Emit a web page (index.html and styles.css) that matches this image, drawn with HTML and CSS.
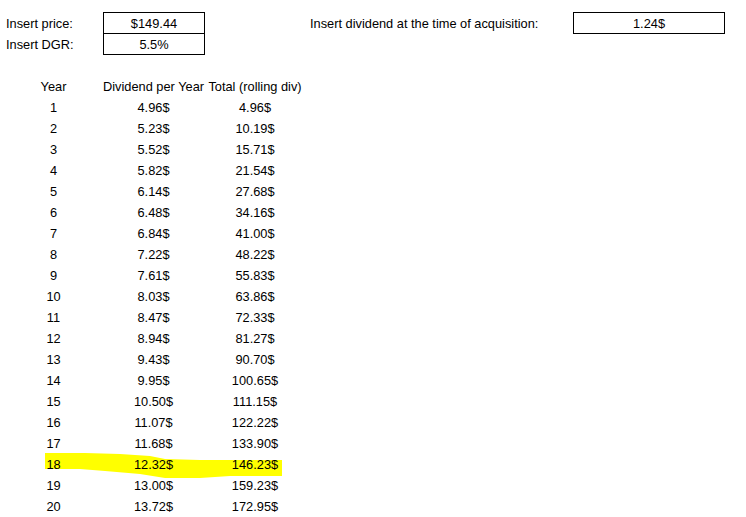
FILE: index.html
```html
<!DOCTYPE html>
<html>
<head>
<meta charset="utf-8">
<link rel="stylesheet" href="styles.css">
</head>
<body>
<div class="sheet">
  <svg class="marker" width="746" height="517" viewBox="0 0 746 517">
    <path d="M45,453 L85,453 L120,454 L150,456 L165,459 L200,460 L282,460 L282,476 L230,476 L200,478 L165,478 L140,474 L105,471 L80,469 L45,469 Z" fill="#ffff00"/>
  </svg>
  <div class="top">
    <div class="label first">Insert price:</div>
    <div class="pair">
      <div class="val">$149.44</div>
      <div class="val sep">5.5%</div>
    </div>
    <div class="blank"></div>
    <div class="label right">Insert dividend at the time of acquisition:</div>
    <div class="single"><div class="val">1.24$</div></div>
    <div class="label first">Insert DGR:</div>
  </div>
  <div class="table">
    <div class="row head"><div class="c a">Year</div><div class="c b">Dividend per Year</div><div class="c cc">Total (rolling div)</div></div>
    <div class="row"><div class="c a">1</div><div class="c b">4.96$</div><div class="c cc">4.96$</div></div>
    <div class="row"><div class="c a">2</div><div class="c b">5.23$</div><div class="c cc">10.19$</div></div>
    <div class="row"><div class="c a">3</div><div class="c b">5.52$</div><div class="c cc">15.71$</div></div>
    <div class="row"><div class="c a">4</div><div class="c b">5.82$</div><div class="c cc">21.54$</div></div>
    <div class="row"><div class="c a">5</div><div class="c b">6.14$</div><div class="c cc">27.68$</div></div>
    <div class="row"><div class="c a">6</div><div class="c b">6.48$</div><div class="c cc">34.16$</div></div>
    <div class="row"><div class="c a">7</div><div class="c b">6.84$</div><div class="c cc">41.00$</div></div>
    <div class="row"><div class="c a">8</div><div class="c b">7.22$</div><div class="c cc">48.22$</div></div>
    <div class="row"><div class="c a">9</div><div class="c b">7.61$</div><div class="c cc">55.83$</div></div>
    <div class="row"><div class="c a">10</div><div class="c b">8.03$</div><div class="c cc">63.86$</div></div>
    <div class="row"><div class="c a">11</div><div class="c b">8.47$</div><div class="c cc">72.33$</div></div>
    <div class="row"><div class="c a">12</div><div class="c b">8.94$</div><div class="c cc">81.27$</div></div>
    <div class="row"><div class="c a">13</div><div class="c b">9.43$</div><div class="c cc">90.70$</div></div>
    <div class="row"><div class="c a">14</div><div class="c b">9.95$</div><div class="c cc">100.65$</div></div>
    <div class="row"><div class="c a">15</div><div class="c b">10.50$</div><div class="c cc">111.15$</div></div>
    <div class="row"><div class="c a">16</div><div class="c b">11.07$</div><div class="c cc">122.22$</div></div>
    <div class="row"><div class="c a">17</div><div class="c b">11.68$</div><div class="c cc">133.90$</div></div>
    <div class="row"><div class="c a">18</div><div class="c b">12.32$</div><div class="c cc">146.23$</div></div>
    <div class="row"><div class="c a">19</div><div class="c b">13.00$</div><div class="c cc">159.23$</div></div>
    <div class="row"><div class="c a">20</div><div class="c b">13.72$</div><div class="c cc">172.95$</div></div>
  </div>
</div>
</body>
</html>
```
FILE: styles.css
```css
html, body {
  margin: 0;
  padding: 0;
  background: #ffffff;
}
body {
  font-family: "Liberation Sans", Arial, sans-serif;
  font-size: 12.8px;
  color: #000000;
}
.sheet {
  position: relative;
  z-index: 0;
  width: 746px;
  height: 517px;
  padding-top: 12px;
  box-sizing: border-box;
  overflow: hidden;
}
.marker {
  position: absolute;
  left: 0;
  top: 0;
  z-index: -1;
}
.top {
  display: grid;
  grid-template-columns: 103px 102px 102px 266px 152px;
  grid-template-rows: 21px 21px;
}
.label {
  height: 21px;
  line-height: 23px;
  white-space: nowrap;
}
.label.first {
  padding-left: 6px;
}
.label.right {
  padding-left: 3px;
}
.pair {
  grid-row: 1 / span 2;
  grid-column: 2;
  box-sizing: border-box;
  height: 43px;
  border: 1px solid #000;
  display: flex;
  flex-direction: column;
}
.val {
  height: 20px;
  line-height: 21px;
  text-align: center;
}
.val.sep {
  height: 21px;
  border-top: 1px solid #000;
  box-sizing: border-box;
}
.single {
  box-sizing: border-box;
  height: 22px;
  border: 1px solid #000;
}
.table {
  margin-top: 21px;
  display: flex;
  flex-direction: column;
}
.row {
  display: grid;
  grid-template-columns: 103px 101px 102px;
  height: 21px;
}
.c {
  line-height: 23px;
  text-align: center;
  white-space: nowrap;
}
.c.a {
  padding-left: 4px;
}
```
